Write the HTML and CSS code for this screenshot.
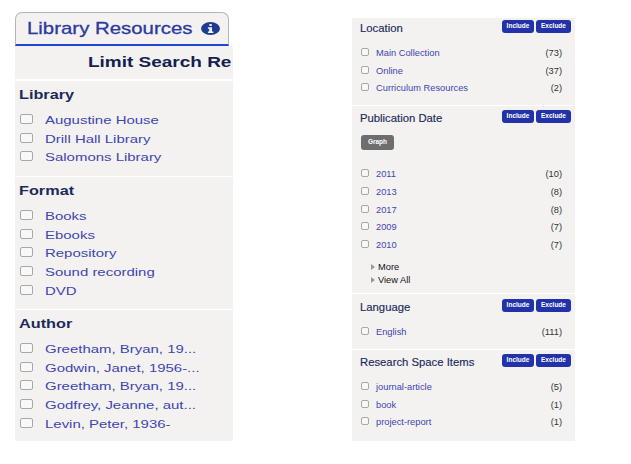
FILE: index.html
```html
<!DOCTYPE html>
<html lang="en">
<head>
<meta charset="utf-8">
<title>Library Resources</title>
<link rel="stylesheet" href="styles.css">
</head>
<body>
<div class="page">
  <aside class="left">
    <div class="tab">
      <span class="wide">Library Resources</span>
      <svg class="info" viewBox="0 0 16 16" width="19" height="13" preserveAspectRatio="none"><circle cx="8" cy="8" r="8" fill="#1f3a93"/><rect x="6.9" y="2.4" width="2.4" height="2.6" rx="1" fill="#f4f2f1"/><path d="M5.8 6.4h3.5v5.2h1.1v1.8H5.8v-1.8h1.1V8.2H5.8z" fill="#f4f2f1"/></svg>
    </div>
    <div class="left-body">
      <div class="limit"><span class="wide">Limit Search Re</span></div>
      <section class="lsec lsec-library">
        <h3><span class="wide">Library</span></h3>
        <ul>
          <li><i class="cb"></i><a class="wide">Augustine House</a></li>
          <li><i class="cb"></i><a class="wide">Drill Hall Library</a></li>
          <li><i class="cb"></i><a class="wide">Salomons Library</a></li>
        </ul>
      </section>
      <section class="lsec">
        <h3><span class="wide">Format</span></h3>
        <ul>
          <li><i class="cb"></i><a class="wide">Books</a></li>
          <li><i class="cb"></i><a class="wide">Ebooks</a></li>
          <li><i class="cb"></i><a class="wide">Repository</a></li>
          <li><i class="cb"></i><a class="wide">Sound recording</a></li>
          <li><i class="cb"></i><a class="wide">DVD</a></li>
        </ul>
      </section>
      <section class="lsec">
        <h3><span class="wide">Author</span></h3>
        <ul>
          <li><i class="cb"></i><a class="wide">Greetham, Bryan, 19...</a></li>
          <li><i class="cb"></i><a class="wide">Godwin, Janet, 1956-...</a></li>
          <li><i class="cb"></i><a class="wide">Greetham, Bryan, 19...</a></li>
          <li><i class="cb"></i><a class="wide">Godfrey, Jeanne, aut...</a></li>
          <li><i class="cb"></i><a class="wide">Levin, Peter, 1936-</a></li>
        </ul>
      </section>
    </div>
  </aside>
  <aside class="right">
    <section class="rsec rsec-location">
      <header><h3>Location</h3><div class="btns"><b>Include</b><b>Exclude</b></div></header>
      <ul>
        <li><i class="cb"></i><a>Main Collection</a><em>(73)</em></li>
        <li><i class="cb"></i><a>Online</a><em>(37)</em></li>
        <li><i class="cb"></i><a>Curriculum Resources</a><em>(2)</em></li>
      </ul>
    </section>
    <section class="rsec rsec-date">
      <header><h3>Publication Date</h3><div class="btns"><b>Include</b><b>Exclude</b></div></header>
      <div class="graph">Graph</div>
      <ul>
        <li><i class="cb"></i><a>2011</a><em>(10)</em></li>
        <li><i class="cb"></i><a>2013</a><em>(8)</em></li>
        <li><i class="cb"></i><a>2017</a><em>(8)</em></li>
        <li><i class="cb"></i><a>2009</a><em>(7)</em></li>
        <li><i class="cb"></i><a>2010</a><em>(7)</em></li>
      </ul>
      <div class="more"><p>More</p><p>View All</p></div>
    </section>
    <section class="rsec rsec-language">
      <header><h3>Language</h3><div class="btns"><b>Include</b><b>Exclude</b></div></header>
      <ul>
        <li><i class="cb"></i><a>English</a><em>(111)</em></li>
      </ul>
    </section>
    <section class="rsec rsec-research">
      <header><h3>Research Space Items</h3><div class="btns"><b>Include</b><b>Exclude</b></div></header>
      <ul>
        <li><i class="cb"></i><a>journal-article</a><em>(5)</em></li>
        <li><i class="cb"></i><a>book</a><em>(1)</em></li>
        <li><i class="cb"></i><a>project-report</a><em>(1)</em></li>
      </ul>
    </section>
  </aside>
</div>
</body>
</html>
```
FILE: styles.css
```css
* { box-sizing: border-box; }
html, body { margin: 0; padding: 0; background: #fff; }
body { font-family: "Liberation Sans", Arial, sans-serif; overflow: hidden; }
ul { list-style: none; margin: 0; padding: 0; }
h3 { margin: 0; }
a { color: #3d45b0; }
.page { display: flex; align-items: flex-start; width: 631px; height: 464px; }

.left { width: 218px; margin: 12px 0 0 15px; }
.wide { display: inline-block; white-space: nowrap; transform: scaleX(1.3); transform-origin: left center; }
.tab {
  width: 214px; height: 34px; display: flex; align-items: center; justify-content: space-between;
  padding: 0 8px 0 11px; color: #2b3a9e; font-size: 15.7px;
  -webkit-text-stroke: .3px #2b3a9e;
  background: #f4f2f1; border: 1px solid #b5b5b5; border-bottom: 2px solid #1f45d8;
  border-radius: 7px 7px 0 0;
}
.left-body { background: #f4f2f1; height: 395px; overflow: hidden; }
.limit {
  height: 35px; padding-left: 73px; border-bottom: 2px solid #fff; white-space: nowrap;
  font-size: 14.6px; font-weight: 700; line-height: 33px; color: #14204f;
}
.lsec { border-top: 1px solid #fff; padding: 0 0 0 4px; height: 133px; }
.lsec-library { border-top: 0; height: 95px; }
.lsec h3 { font-size: 12.5px; font-weight: 700; color: #1c2a5a; line-height: 16px; padding-top: 6px; height: 30px; }
.lsec li { display: flex; align-items: center; height: 18.6px; padding-left: 1px; font-size: 11.5px; }
.lsec li .cb { margin: -2px 12px 0 0; }

.cb { display: block; flex: none; width: 13px; height: 10px; border: 1px solid #a8a8a8; border-radius: 2px; background: #f8f8f8; }

.right { width: 223px; height: 423px; margin: 18px 0 0 119px; background: #f4f2f1; }
.rsec { padding: 0 4px 0 8px; border-bottom: 1px solid #fff; font-size: 9.3px; }
.rsec:last-child { border-bottom: 0; }
.rsec-location { height: 88px; padding-top: 2px; }
.rsec-date { height: 188px; padding-top: 4px; }
.rsec-language { height: 56px; padding-top: 5px; }
.rsec-research { height: 91px; padding-top: 4px; }
.rsec header { display: flex; justify-content: space-between; align-items: flex-start; height: 24px; }
.rsec h3 { font-size: 11.3px; font-weight: 400; color: #1a2a5c; -webkit-text-stroke: .15px #1a2a5c; line-height: 16px; }
.btns { display: flex; gap: 2px; }
.btns b { display: block; height: 13px; background: #2233aa; color: #fff; font-size: 6.5px; line-height: 12px; border-radius: 3px; text-align: center; }
.btns b:first-child { width: 32px; }
.btns b:last-child { width: 35px; }
.rsec li { display: flex; align-items: center; height: 17.7px; padding-right: 9px; }
.rsec li .cb { width: 8px; height: 8px; margin: -2px 7px 0 1px; }
.rsec li a { flex: 1; }
.rsec li em { font-style: normal; color: #333; }
.rsec-date ul { padding-top: 15.5px; }
.graph { width: 33px; height: 15px; margin: 1px 0 0 1px; background: #6e6e6e; color: #fff; font-size: 6.5px; font-weight: 700; line-height: 14px; text-align: center; border-radius: 3px; }
.more { padding: 7px 0 0 11px; color: #111; }
.more p { margin: 0; height: 13px; line-height: 13px; display: flex; align-items: center; gap: 3px; }
.more p::before { content: ""; width: 0; height: 0; border-left: 4px solid #999; border-top: 3px solid transparent; border-bottom: 3px solid transparent; }
```
